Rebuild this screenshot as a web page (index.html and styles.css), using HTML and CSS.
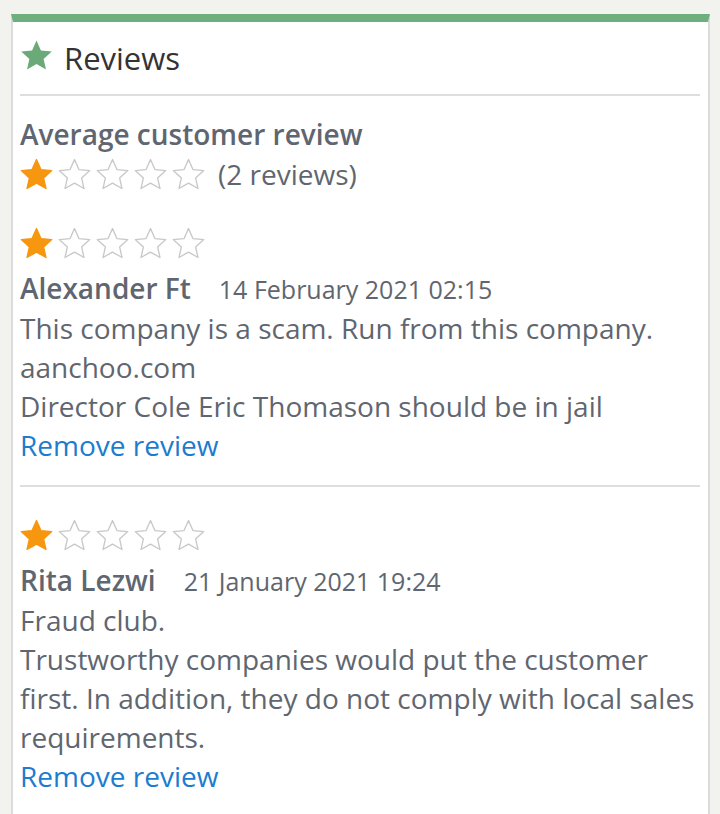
FILE: index.html
```html
<!DOCTYPE html>
<html>
<head>
<meta charset="utf-8">
<link rel="stylesheet" href="styles.css">
</head>
<body>
<svg width="0" height="0" class="defs">
  <defs>
    <path id="star" d="M16 1.5 L20.3 11.2 L30.8 12.2 L22.9 19.3 L25.2 29.6 L16 24.3 L6.8 29.6 L9.1 19.3 L1.2 12.2 L11.7 11.2 Z"/>
  </defs>
</svg>
<div class="card">
  <div class="head">
    <svg class="head-star" viewBox="0 0 32 32"><use href="#star"/></svg>
    <span class="head-title">Reviews</span>
  </div>
  <div class="avg">
    <div class="avg-title">Average customer review</div>
    <div class="avg-row">
      <span class="stars">
        <svg class="s on" viewBox="0 0 32 32"><use href="#star"/></svg><svg class="s" viewBox="0 0 32 32"><use href="#star"/></svg><svg class="s" viewBox="0 0 32 32"><use href="#star"/></svg><svg class="s" viewBox="0 0 32 32"><use href="#star"/></svg><svg class="s" viewBox="0 0 32 32"><use href="#star"/></svg>
      </span>
      <span class="count">(2 reviews)</span>
    </div>
  </div>
  <div class="review">
    <div class="stars">
      <svg class="s on" viewBox="0 0 32 32"><use href="#star"/></svg><svg class="s" viewBox="0 0 32 32"><use href="#star"/></svg><svg class="s" viewBox="0 0 32 32"><use href="#star"/></svg><svg class="s" viewBox="0 0 32 32"><use href="#star"/></svg><svg class="s" viewBox="0 0 32 32"><use href="#star"/></svg>
    </div>
    <div class="meta"><span class="name">Alexander Ft</span><span class="date">14 February 2021 02:15</span></div>
    <div class="text">This company is a scam. Run from this company.<br>aanchoo.com<br>Director Cole Eric Thomason should be in jail</div>
    <a class="remove" href="#">Remove review</a>
  </div>
  <div class="review">
    <div class="stars">
      <svg class="s on" viewBox="0 0 32 32"><use href="#star"/></svg><svg class="s" viewBox="0 0 32 32"><use href="#star"/></svg><svg class="s" viewBox="0 0 32 32"><use href="#star"/></svg><svg class="s" viewBox="0 0 32 32"><use href="#star"/></svg><svg class="s" viewBox="0 0 32 32"><use href="#star"/></svg>
    </div>
    <div class="meta"><span class="name">Rita Lezwi</span><span class="date">21 January 2021 19:24</span></div>
    <div class="text">Fraud club.<br>Trustworthy companies would put the customer first. In addition, they do not comply with local sales requirements.</div>
    <a class="remove" href="#">Remove review</a>
  </div>
</div>
</body>
</html>
```
FILE: styles.css
```css
html, body {
  margin: 0;
  padding: 0;
  background: #f2f2ee;
}
body {
  font-family: "Open Sans", "Noto Sans", sans-serif;
  color: #5f6670;
  padding: 14px 10px 0 11px;
}
.defs {
  position: absolute;
}
.card {
  background: #fff;
  border-top: 8px solid #6fae7d;
  border-left: 2px solid #dcdcdc;
  border-right: 2px solid #dcdcdc;
  padding: 0 8px 0 7px;
  min-height: 800px;
}
.head {
  height: 72px;
  display: flex;
  align-items: center;
  border-bottom: 2px solid #dedede;
}
.head-star {
  width: 33px;
  height: 33px;
  fill: #6aaa78;
  margin-top: -6px;
}
.head-title {
  font-size: 31px;
  color: #333;
  margin-left: 11px;
  line-height: 1;
}
.avg {
  padding-top: 19px;
}
.avg-title {
  font-size: 28px;
  font-weight: 600;
  line-height: 39px;
}
.avg-row {
  display: flex;
  align-items: center;
  height: 41px;
}
.stars {
  display: flex;
  align-items: center;
  gap: 5px;
}
.s {
  width: 33px;
  height: 33px;
  fill: #fff;
  stroke: #c8c8c8;
  stroke-width: 1.3;
  stroke-linejoin: round;
}
.s.on {
  fill: #f7960f;
  stroke: #f7960f;
}
.count {
  font-size: 28px;
  margin-left: 13px;
  line-height: 39px;
}
.review {
  padding: 28px 0 20px;
  border-bottom: 2px solid #dedede;
}
.review:last-child {
  border-bottom: none;
}
.review .stars {
  height: 40px;
}
.meta {
  margin-top: 6px;
  line-height: 39px;
  display: flex;
  align-items: baseline;
}
.name {
  font-size: 28px;
  font-weight: 600;
}
.date {
  font-size: 25px;
  margin-left: 28px;
}
.text {
  font-size: 28px;
  line-height: 39px;
}
.remove {
  display: block;
  font-size: 28px;
  line-height: 39px;
  color: #1c7ccf;
  text-decoration: none;
}
```
